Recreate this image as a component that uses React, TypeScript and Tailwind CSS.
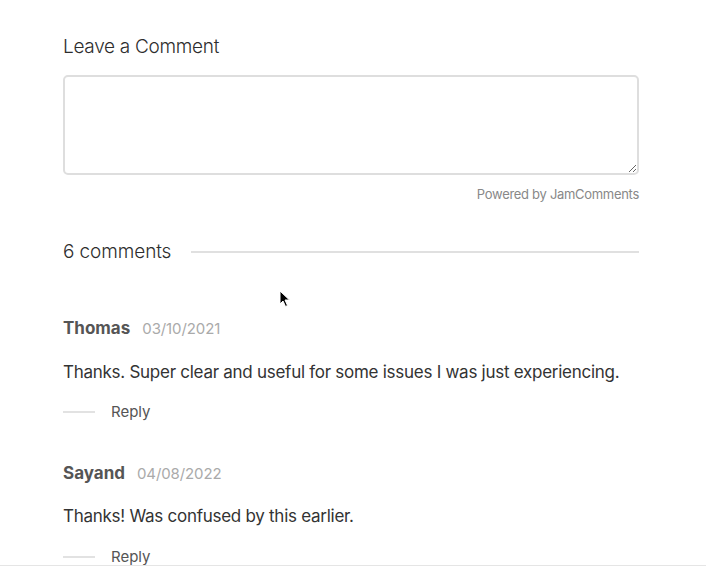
const comments = [
  {
    name: 'Thomas',
    date: '03/10/2021',
    text: 'Thanks. Super clear and useful for some issues I was just experiencing.',
  },
  {
    name: 'Sayand',
    date: '04/08/2022',
    text: 'Thanks! Was confused by this earlier.',
  },
]

function Cursor() {
  return (
    <svg
      className="absolute left-[279px] top-[290px]"
      width="12"
      height="18"
      viewBox="0 0 12 18"
    >
      <path
        d="M1 1 L1 14 L4 11 L6.5 16.5 L8.5 15.5 L6 10 L10.5 10 Z"
        fill="#000"
        stroke="#fff"
        strokeWidth="1"
      />
    </svg>
  )
}

export default function App() {
  return (
    <div
      className="relative w-[706px] h-[566px] overflow-hidden bg-white border-b border-[#e5e5e5] text-[#333]"
      style={{ fontFamily: 'Inter, "Liberation Sans", sans-serif' }}
    >
      <div className="ml-[63px] w-[576px] pt-[33px]">
        <h2 className="text-[19px] tracking-[-0.3px] font-light leading-7 text-[#2d2d2d]">
          Leave a Comment
        </h2>
        <textarea className="mt-[14px] block w-full h-[100px] rounded-[5px] border-2 border-[#dedede] bg-white outline-none" />
        <p className="mt-[10px] text-right text-[13px] tracking-[-0.3px] text-[#888]">
          Powered by JamComments
        </p>

        <div className="mt-[33px] flex items-center gap-5">
          <span className="text-[19px] tracking-[-0.1px] font-light text-[#2d2d2d]">6 comments</span>
          <div className="flex-1 h-[2px] bg-[#e0e0e0]" />
        </div>

        <div className="mt-[50px] flex flex-col gap-[37px]">
          {comments.map((c) => (
            <div key={c.name}>
              <div className="flex items-baseline gap-[12px]">
                <span className="text-[17px] font-bold text-[#555]">{c.name}</span>
                <span className="text-[15px] tracking-[-0.1px] text-[#aaa]">{c.date}</span>
              </div>
              <p className="mt-[18px] text-[17px] tracking-[-0.27px] text-[#333]">{c.text}</p>
              <div className="mt-[16px] flex items-center gap-4">
                <div className="w-[32px] h-[2px] bg-[#e2e2e2]" />
                <span className="text-[15px] text-[#555]">Reply</span>
              </div>
            </div>
          ))}
        </div>
      </div>
      <Cursor />
    </div>
  )
}
